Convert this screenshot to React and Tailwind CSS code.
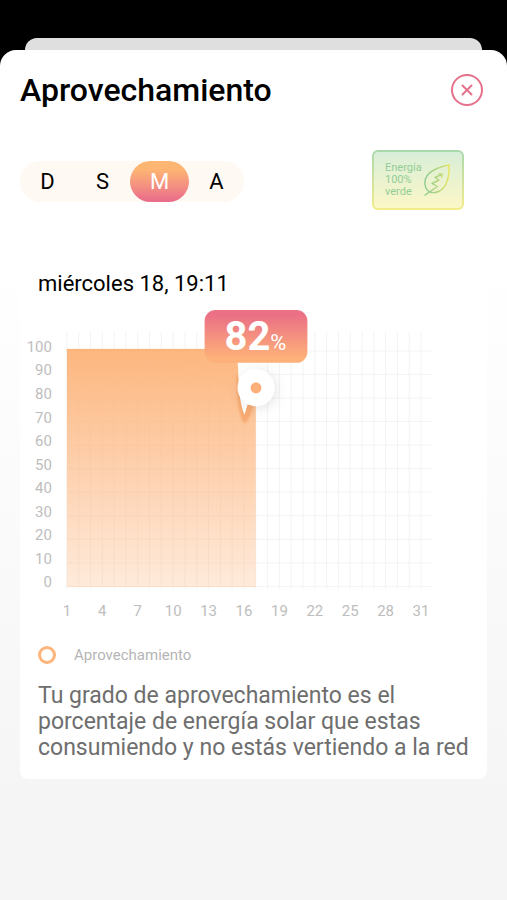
import React, { useState } from 'react';

const PERIODS = [
    { id: 'D', label: 'Día' },
    { id: 'S', label: 'Semana' },
    { id: 'M', label: 'Mes' },
    { id: 'A', label: 'Año' }
];

const DAYS = Array.from({ length: 31 }, (_, i) => i + 1);
const LEVELS = [100, 90, 80, 70, 60, 50, 40, 30, 20, 10, 0];

// chart geometry, in viewBox units
const LEFT = 47;
const RIGHT = 413;
const BOTTOM = 288;
const dayX = day => LEFT + (day - 1) * 11.83;
const levelY = level => BOTTOM - level * 2.36;

const PeriodSwitch = ({ value, onChange }) => (
    <div className="flex h-[41px] rounded-full bg-[#fff9f4]">
        {PERIODS.map(({ id, label }) => (
            <button
                key={id}
                type="button"
                aria-label={label}
                aria-pressed={value === id}
                onClick={() => onChange(id)}
                className={
                    value === id
                        ? 'w-[59px] rounded-full text-[22px] text-white bg-linear-to-b from-[#fdb572] from-20% to-[#e9698a]'
                        : 'w-[55px] rounded-full text-[22px] text-black'
                }
            >
                {id}
            </button>
        ))}
    </div>
);

const GreenBadge = () => (
    <div className="w-[92px] h-[60px] rounded-md p-[2px] bg-linear-to-b from-[#a9d8ac] to-[#f3ec8a]">
        <div className="flex items-center justify-between h-full rounded-sm px-[11px] bg-linear-to-b from-[#d8eed8] to-[#fcf7c6]">
            <p className="text-[11px] leading-3 text-[#93cd98]">Energía<br />100%<br />verde</p>
            <svg viewBox="0 0 28 34" className="w-7 h-[34px] shrink-0" fill="none" strokeWidth="1.4" strokeLinecap="round" strokeLinejoin="round" aria-hidden="true">
                <defs>
                    <linearGradient id="leaf" x1="2" y1="0" x2="27" y2="0" gradientUnits="userSpaceOnUse">
                        <stop offset="0" stopColor="#8ccb93" />
                        <stop offset="0.6" stopColor="#b9d77c" />
                        <stop offset="1" stopColor="#ece75a" />
                    </linearGradient>
                </defs>
                <path stroke="url(#leaf)" d="M26 2C18 3.500 10 6 5 11.500C0.500 17 1 25 6 28.500C12 31.500 19.500 28 23 21C26 14.500 26.500 8 26 2Z" />
                <path stroke="url(#leaf)" d="M2 32L14.500 23.500L9 20.500L16 17L12 14.500L18.500 11.500M16 11L19 11.200L18.500 14" />
            </svg>
        </div>
    </div>
);

const UsageChart = () => (
    <svg viewBox="0 0 468 332" className="block w-full h-auto" role="img" aria-label="Aprovechamiento 82%">
        <defs>
            <linearGradient id="area" x1="0" y1="0" x2="0" y2="1">
                <stop offset="0" stopColor="#fdb67f" />
                <stop offset="1" stopColor="#fdb67f" stopOpacity="0.28" />
            </linearGradient>
            <linearGradient id="tip" x1="0" y1="0" x2="0" y2="1">
                <stop offset="0.1" stopColor="#eb7085" />
                <stop offset="0.9" stopColor="#fdb079" />
            </linearGradient>
            <filter id="soft" x="-60%" y="-60%" width="220%" height="220%">
                <feDropShadow dx="2" dy="2" stdDeviation="6" floodColor="#000" floodOpacity="0.11" />
            </filter>
            <filter id="glow" x="-60%" y="-30%" width="220%" height="160%">
                <feGaussianBlur stdDeviation="1.2" />
            </filter>
        </defs>

        <g stroke="#f3f3f3" strokeWidth="1">
            {DAYS.map(day => (
                <line key={day} x1={dayX(day)} x2={dayX(day)} y1="34" y2="292" />
            ))}
            {LEVELS.map(level => (
                <line key={level} x1={LEFT} x2={RIGHT} y1={levelY(level) + 1} y2={levelY(level) + 1} />
            ))}
        </g>

        <rect x={LEFT} y="51" width={dayX(17) - LEFT} height="238" fill="url(#area)" />
        <path d={`M${LEFT} 52H${dayX(17)}`} stroke="#fdb57c" strokeWidth="2" />
        <path d={`M${LEFT} 289H${dayX(17)}`} stroke="#fcdcc2" strokeWidth="1" />

        <g className="text-[15px]" fill="#bdbdbd">
            {LEVELS.map(level => (
                <text key={level} x="32" y={levelY(level) + 2} textAnchor="end">{level}</text>
            ))}
            {DAYS.filter(day => day % 3 === 1).map(day => (
                <text key={day} x={dayX(day)} y="319" textAnchor="middle">{day}</text>
            ))}
        </g>

        {/* value bubble and marker */}
        <path d="M217 76C217 98 219 120 225 126C230 122 233 114 234 102Z" fill="#f5a468" fillOpacity="0.8" filter="url(#glow)" />
        <path d="M218 60H236.500V104L228 107L225 117Q221 108 219.500 92Z" fill="#fff" />
        <circle cx="236.500" cy="90" r="18.500" fill="#fff" filter="url(#soft)" />
        <circle cx="236.500" cy="90" r="5.500" fill="#fdb079" />
        <rect x="185" y="12" width="103" height="53" rx="11" fill="url(#tip)" />
        <text x="236" y="52" textAnchor="middle" fill="#fff" className="text-[40px] font-bold">
            82<tspan className="text-[22px] font-normal">%</tspan>
        </text>
    </svg>
);

const App = () => {
    const [period, setPeriod] = useState('M');

    return (
        <div className="flex flex-col min-h-screen bg-black pt-[38px] font-[Roboto,sans-serif]">
            <div className="mx-[25px] h-3 rounded-t-xl bg-[#dfdfdf]" />
            <main className="flex-1 rounded-t-2xl bg-white bg-linear-to-b from-white from-25% to-[#f5f5f5] to-90% pb-8">
                <header className="flex items-center justify-between pt-6 pl-5 pr-6">
                    <h1 className="text-[32px] leading-8 font-medium text-black">Aprovechamiento</h1>
                    <button type="button" aria-label="Cerrar" className="flex items-center justify-center size-8 rounded-full border-2 border-[#e5718c] text-[#e5718c]">
                        <svg viewBox="0 0 12 12" className="size-3" stroke="currentColor" strokeWidth="2" strokeLinecap="round" aria-hidden="true">
                            <path d="M1.500 1.500L10.500 10.500M10.500 1.500L1.500 10.500" />
                        </svg>
                    </button>
                </header>

                <div className="flex items-end justify-between mt-11 pl-5 pr-[43px]">
                    <div className="pb-2">
                        <PeriodSwitch value={period} onChange={setPeriod} />
                    </div>
                    <GreenBadge />
                </div>

                <section className="mx-5 mt-[52px] pt-2 pb-[18px] rounded-lg bg-white">
                    <h2 className="px-[18px] text-[22px] leading-7 text-black">miércoles 18, 19:11</h2>
                    <UsageChart />
                    <div className="flex items-center gap-[18px] h-5 mt-4 px-[18px]">
                        <span className="size-[18px] rounded-full border-3 border-[#fdb57c]" />
                        <span className="text-[15px] text-[#b5b5b5]">Aprovechamiento</span>
                    </div>
                    <p className="mt-[18px] px-[18px] text-[23px] leading-[26px] text-[#6e6e6e]">
                        Tu grado de aprovechamiento es el porcentaje de energía solar que estas consumiendo y no estás vertiendo a la red
                    </p>
                </section>
            </main>
        </div>
    );
};

export default App;
